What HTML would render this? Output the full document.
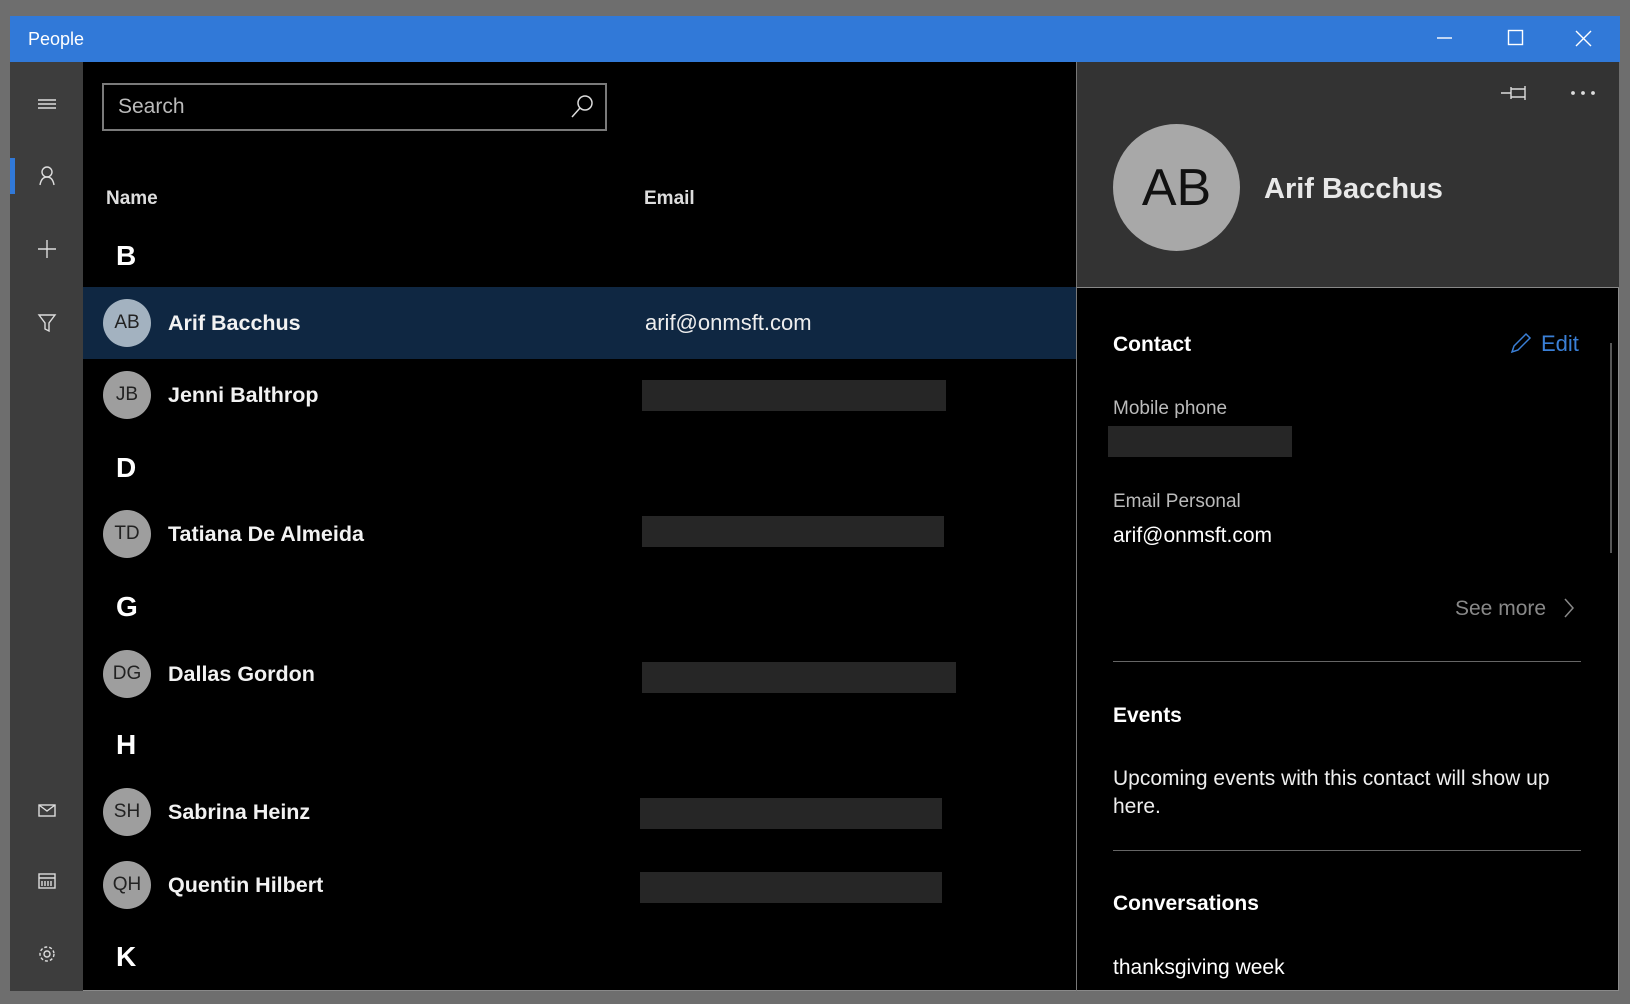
<!DOCTYPE html>
<html><head><meta charset="utf-8"><style>
*{margin:0;padding:0;box-sizing:border-box}
body{width:1630px;height:1004px;background:#6e6e6e;font-family:"Liberation Sans",sans-serif;position:relative;overflow:hidden;color:#fff}
.a{position:absolute}
.win{left:10px;top:16px;width:1609px;height:975px;background:#000;border:1px solid #8a8a8a}
.t{white-space:nowrap;line-height:1}
.av{position:absolute;width:48px;height:48px;border-radius:50%;background:#9e9e9e;color:#222;font-size:19px;display:flex;align-items:center;justify-content:center;left:103px}
.nm{position:absolute;left:168px;font-size:21.5px;font-weight:bold;color:#f2f2f2}
.red{position:absolute;height:31px;background:#262626}
.hd{position:absolute;left:116px;font-size:28px;font-weight:bold}
</style></head><body>
<div class="a win"></div>
<div class="a" style="left:10px;top:16px;width:1610px;height:46px;background:#3179d8"></div>
<div class="a t" style="left:28px;top:30px;font-size:18px;color:#fff">People</div>
<svg class="a" style="left:1430px;top:26px" width="170" height="24" stroke="#fff" stroke-width="1.4" fill="none">
<line x1="7" y1="12" x2="22" y2="12"/><rect x="78.5" y="4.5" width="14" height="14"/><path d="M146 5l15 15M161 5l-15 15"/></svg>
<div class="a" style="left:10px;top:62px;width:73px;height:929px;background:#3d3d3d"></div>
<div class="a" style="left:10px;top:158px;width:5px;height:36px;background:#3179d8"></div>
<svg class="a" style="left:10px;top:62px" width="73" height="929" stroke="#ddd" stroke-width="1.4" fill="none">
<path d="M28 38h18M28 42h18M28 46h18"/>
<circle cx="37" cy="110" r="5"/><path d="M30 123c1-6 4-8 7-8s6 2 7 8"/>
<path d="M37 178v18M28 187h18"/>
<path d="M29 253h16l-6 8v8l-4-2v-6z"/>
<rect x="29" y="743" width="16" height="11"/><path d="M29 743l8 6 8-6"/>
<rect x="29" y="812" width="16" height="14"/><path d="M29 816h16M32 819v5M35 819v5M38 819v5M41 819v5"/>
<circle cx="37" cy="892" r="3"/><circle cx="37" cy="892" r="7" stroke-dasharray="3 2"/>
</svg>
<div class="a" style="left:102px;top:83px;width:505px;height:48px;border:2px solid #7a7a7a"></div>
<div class="a t" style="left:118px;top:96px;font-size:21px;color:#bbb">Search</div>
<svg class="a" style="left:568px;top:92px" width="30" height="30" stroke="#ddd" stroke-width="1.5" fill="none"><circle cx="17" cy="11" r="7"/><path d="M12 16l-8 9"/></svg>
<div class="a t" style="left:106px;top:189px;font-size:19px;font-weight:bold;color:#ddd">Name</div>
<div class="a t" style="left:644px;top:189px;font-size:19px;font-weight:bold;color:#ddd">Email</div>
<div class="hd t" style="top:242px">B</div>
<div class="a" style="left:83px;top:287px;width:993px;height:72px;background:#0f2742"></div>
<div class="av" style="top:299px;background:#a3b2c0">AB</div><div class="nm t" style="top:313px">Arif Bacchus</div>
<div class="a t" style="left:645px;top:312px;font-size:22px;color:#eee">arif@onmsft.com</div>
<div class="av" style="top:371px">JB</div><div class="nm t" style="top:385px">Jenni Balthrop</div>
<div class="red" style="left:642px;top:380px;width:304px"></div>
<div class="hd t" style="top:454px">D</div>
<div class="av" style="top:510px">TD</div><div class="nm t" style="top:524px">Tatiana De Almeida</div>
<div class="red" style="left:642px;top:516px;width:302px"></div>
<div class="hd t" style="top:593px">G</div>
<div class="av" style="top:650px">DG</div><div class="nm t" style="top:664px">Dallas Gordon</div>
<div class="red" style="left:642px;top:662px;width:314px"></div>
<div class="hd t" style="top:731px">H</div>
<div class="av" style="top:788px">SH</div><div class="nm t" style="top:802px">Sabrina Heinz</div>
<div class="red" style="left:640px;top:798px;width:302px"></div>
<div class="av" style="top:861px">QH</div><div class="nm t" style="top:875px">Quentin Hilbert</div>
<div class="red" style="left:640px;top:872px;width:302px"></div>
<div class="hd t" style="top:943px">K</div>
<div class="a" style="left:1076px;top:62px;width:543px;height:226px;background:#333;border-left:1px solid #777;border-bottom:1px solid #888"></div>
<div class="a" style="left:1076px;top:288px;width:1px;height:703px;background:#777"></div>
<svg class="a" style="left:1498px;top:80px" width="110" height="26" stroke="#ddd" stroke-width="1.4" fill="none">
<path d="M3 13h10M13 7v12M13 9h14v8H13M27 6v14"/><circle cx="75" cy="13" r="1.2" fill="#ddd"/><circle cx="85" cy="13" r="1.2" fill="#ddd"/><circle cx="95" cy="13" r="1.2" fill="#ddd"/></svg>
<div class="a" style="left:1113px;top:124px;width:127px;height:127px;border-radius:50%;background:#a8a8a8;color:#111;font-size:52px;display:flex;align-items:center;justify-content:center">AB</div>
<div class="a t" style="left:1264px;top:175px;font-size:29px;font-weight:bold;color:#e8e8e8">Arif Bacchus</div>
<div class="a t" style="left:1113px;top:334px;font-size:21px;font-weight:bold">Contact</div>
<svg class="a" style="left:1508px;top:330px" width="26" height="26" stroke="#3a7fd6" stroke-width="1.5" fill="none"><path d="M4 22l2-6L18 4l4 4L10 20z"/></svg>
<div class="a t" style="left:1541px;top:333px;font-size:22px;color:#3a7fd6">Edit</div>
<div class="a" style="left:1610px;top:343px;width:2px;height:210px;background:#555"></div>
<div class="a t" style="left:1113px;top:399px;font-size:19px;color:#bbb">Mobile phone</div>
<div class="red" style="left:1108px;top:426px;width:184px"></div>
<div class="a t" style="left:1113px;top:492px;font-size:19px;color:#bbb">Email Personal</div>
<div class="a t" style="left:1113px;top:525px;font-size:21px;color:#fff">arif@onmsft.com</div>
<div class="a t" style="left:1455px;top:598px;font-size:21px;color:#888">See more</div>
<svg class="a" style="left:1562px;top:596px" width="14" height="24" stroke="#888" stroke-width="1.5" fill="none"><path d="M3 3l8 9-8 9"/></svg>
<div class="a" style="left:1113px;top:661px;width:468px;height:1px;background:#666"></div>
<div class="a t" style="left:1113px;top:705px;font-size:21px;font-weight:bold">Events</div>
<div class="a" style="left:1113px;top:765px;font-size:21px;line-height:28px;color:#eee;width:440px">Upcoming events with this contact will show up here.</div>
<div class="a" style="left:1113px;top:850px;width:468px;height:1px;background:#666"></div>
<div class="a t" style="left:1113px;top:893px;font-size:21px;font-weight:bold">Conversations</div>
<div class="a t" style="left:1113px;top:957px;font-size:21px;color:#fff">thanksgiving week</div>
</body></html>
